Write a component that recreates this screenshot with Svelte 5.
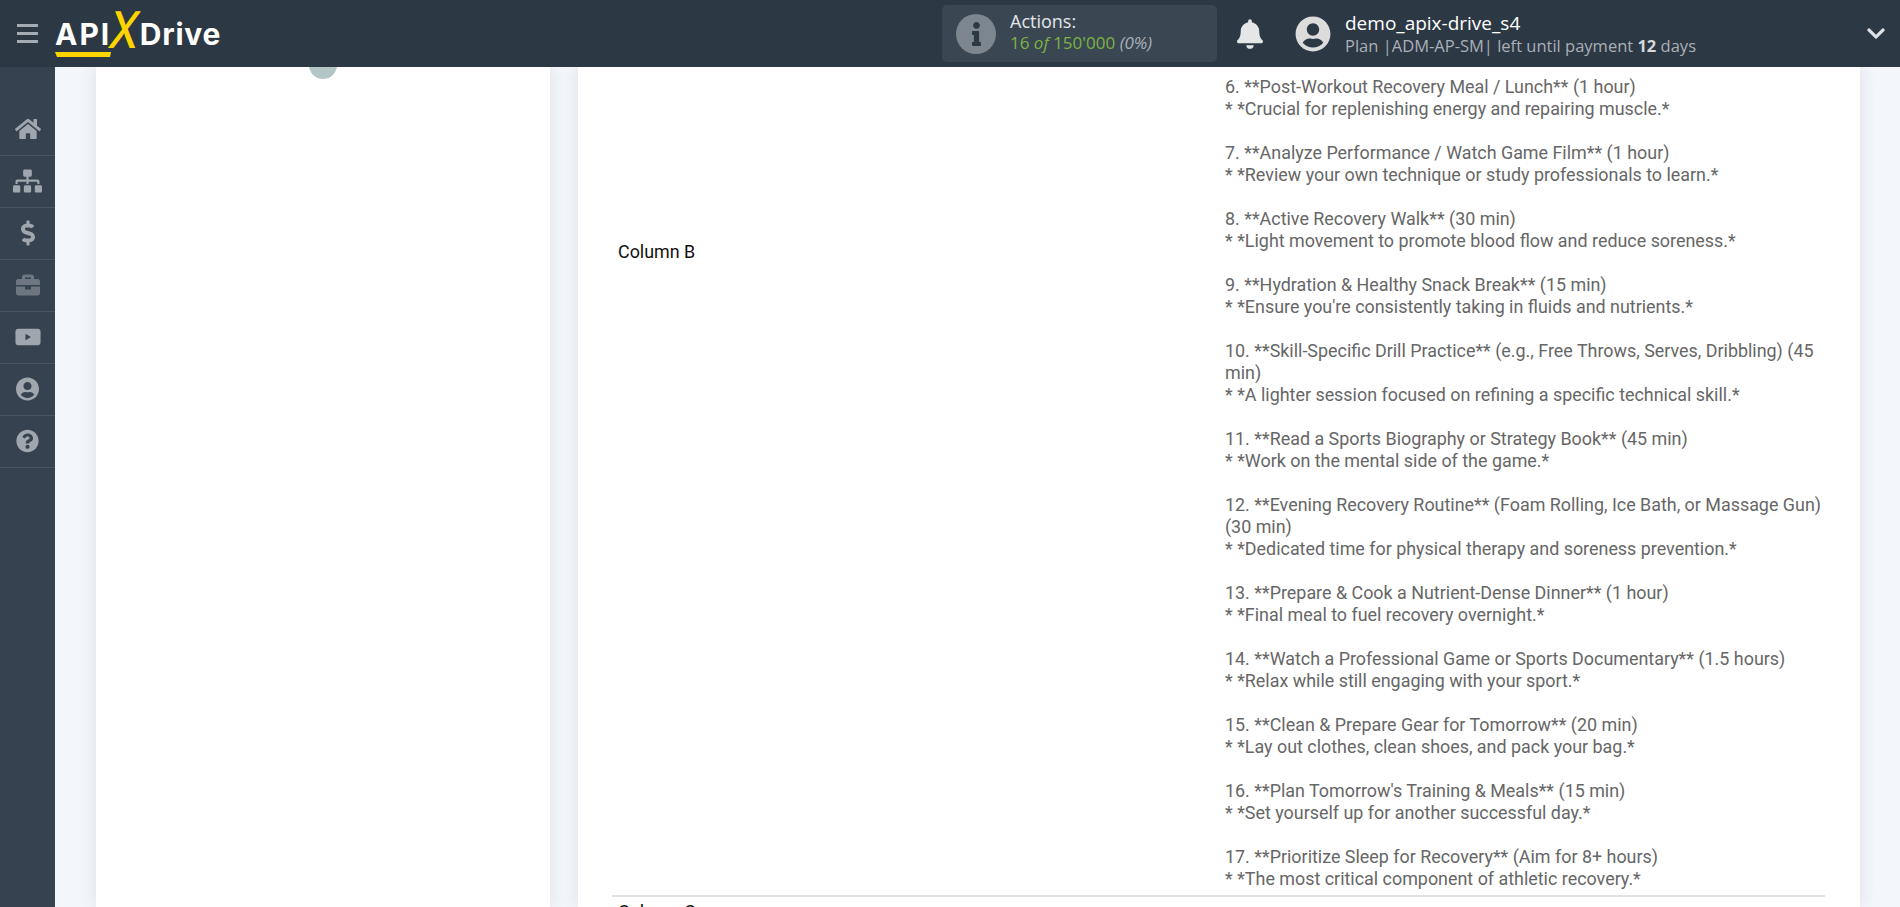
<script lang="ts">
  // visible part of the long value cell, blocks split by blank lines
  const blocks: string[][] = [
    ['6. **Post-Workout Recovery Meal / Lunch** (1 hour)', '* *Crucial for replenishing energy and repairing muscle.*'],
    ['7. **Analyze Performance / Watch Game Film** (1 hour)', '* *Review your own technique or study professionals to learn.*'],
    ['8. **Active Recovery Walk** (30 min)', '* *Light movement to promote blood flow and reduce soreness.*'],
    ['9. **Hydration & Healthy Snack Break** (15 min)', "* *Ensure you're consistently taking in fluids and nutrients.*"],
    ['10. **Skill-Specific Drill Practice** (e.g., Free Throws, Serves, Dribbling) (45 min)', '* *A lighter session focused on refining a specific technical skill.*'],
    ['11. **Read a Sports Biography or Strategy Book** (45 min)', '* *Work on the mental side of the game.*'],
    ['12. **Evening Recovery Routine** (Foam Rolling, Ice Bath, or Massage Gun) (30 min)', '* *Dedicated time for physical therapy and soreness prevention.*'],
    ['13. **Prepare & Cook a Nutrient-Dense Dinner** (1 hour)', '* *Final meal to fuel recovery overnight.*'],
    ['14. **Watch a Professional Game or Sports Documentary** (1.5 hours)', '* *Relax while still engaging with your sport.*'],
    ['15. **Clean & Prepare Gear for Tomorrow** (20 min)', '* *Lay out clothes, clean shoes, and pack your bag.*'],
    ["16. **Plan Tomorrow's Training & Meals** (15 min)", '* *Set yourself up for another successful day.*'],
    ['17. **Prioritize Sleep for Recovery** (Aim for 8+ hours)', '* *The most critical component of athletic recovery.*'],
  ];

  const nav = [
    { vb: '0 0 576 512', w: 26, d: 'M280.37 148.26L96 300.11V464a16 16 0 0 0 16 16l112.06-.29a16 16 0 0 0 15.92-16V368a16 16 0 0 1 16-16h64a16 16 0 0 1 16 16v95.64a16 16 0 0 0 16 16.05L464 480a16 16 0 0 0 16-16V300L295.67 148.26a12.19 12.19 0 0 0-15.3 0zM571.6 251.47L488 182.56V44.05a12 12 0 0 0-12-12h-56a12 12 0 0 0-12 12v72.61L318.47 43a48 48 0 0 0-61 0L4.34 251.47a12 12 0 0 0-1.6 16.9l25.5 31A12 12 0 0 0 45.15 301l235.22-193.74a12.19 12.19 0 0 1 15.3 0L530.9 301a12 12 0 0 0 16.9-1.6l25.5-31a12 12 0 0 0-1.7-16.93z' },
    { vb: '0 0 640 512', w: 29, d: 'M128 352H32c-17.67 0-32 14.33-32 32v96c0 17.67 14.33 32 32 32h96c17.67 0 32-14.33 32-32v-96c0-17.67-14.33-32-32-32zm-24-80h192v48h48v-48h192v48h48v-57.59c0-21.17-17.23-38.41-38.41-38.41H344v-64h40c17.67 0 32-14.33 32-32V32c0-17.67-14.33-32-32-32H256c-17.67 0-32 14.33-32 32v96c0 17.67 14.33 32 32 32h40v64H94.41C73.23 224 56 241.23 56 262.41V320h48v-48zm264 80h-96c-17.67 0-32 14.33-32 32v96c0 17.67 14.33 32 32 32h96c17.67 0 32-14.33 32-32v-96c0-17.67-14.33-32-32-32zm240 0h-96c-17.67 0-32 14.33-32 32v96c0 17.67 14.33 32 32 32h96c17.67 0 32-14.33 32-32v-96c0-17.67-14.33-32-32-32z' },
    { vb: '0 0 288 512', w: 14, d: 'M209.2 233.4l-108-31.6C88.7 198.2 80 186.5 80 173.5c0-16.3 13.2-29.5 29.5-29.5h66.3c12.2 0 24.2 3.7 34.2 10.5 6.1 4.1 14.3 3.1 19.5-2l34.8-34c7.1-6.9 6.1-18.4-1.8-24.5C238 74.8 207.4 64.1 176 64V16c0-8.8-7.2-16-16-16h-32c-8.8 0-16 7.2-16 16v48h-2.5C45.8 64-5.4 118.7.5 183.6c4.2 46.1 39.4 83.6 83.8 96.6l102.5 30c12.5 3.7 21.2 15.3 21.2 28.3 0 16.3-13.2 29.5-29.5 29.5h-66.3C100 368 88 364.3 78 357.5c-6.1-4.1-14.3-3.1-19.5 2l-34.8 34c-7.1 6.9-6.1 18.4 1.8 24.5 24.5 19.2 55.1 29.9 86.5 30v48c0 8.8 7.2 16 16 16h32c8.8 0 16-7.2 16-16v-48.2c46.6-.9 90.3-28.6 105.7-72.7 21.5-61.6-14.6-124.8-72.5-141.7z' },
    { vb: '0 0 512 512', w: 24, dim: true, d: 'M320 336c0 8.84-7.16 16-16 16h-96c-8.84 0-16-7.16-16-16v-48H0v144c0 25.6 22.4 48 48 48h416c25.6 0 48-22.4 48-48V288H320v48zm144-208h-80V80c0-25.6-22.4-48-48-48H176c-25.6 0-48 22.4-48 48v48H48c-25.6 0-48 22.4-48 48v80h512v-80c0-25.6-22.4-48-48-48zm-144 0H192V96h128v32z' },
    { vb: '0 0 576 512', w: 26, d: 'M70 74h436c34 0 60 26 60 60v244c0 34-26 60-60 60H70c-34 0-60-26-60-60V134c0-34 26-60 60-60zM232 186v140l120-70z' },
    { vb: '0 0 496 512', w: 23, d: 'M248 8C111 8 0 119 0 256s111 248 248 248 248-111 248-248S385 8 248 8zm0 96c48.6 0 88 39.4 88 88s-39.4 88-88 88-88-39.4-88-88 39.4-88 88-88zm0 344c-58.7 0-111.3-26.6-146.5-68.2 18.8-35.4 55.6-59.8 98.5-59.8 2.4 0 4.8.4 7.1 1.1 13 4.2 26.6 6.9 40.9 6.9 14.3 0 28-2.7 40.9-6.9 2.3-.7 4.7-1.1 7.1-1.1 42.9 0 79.7 24.4 98.5 59.8C359.3 421.4 306.7 448 248 448z' },
    { vb: '0 0 512 512', w: 23, d: 'M504 256c0 136.997-111.043 248-248 248S8 392.997 8 256C8 119.083 119.043 8 256 8s248 111.083 248 248zM262.655 90c-54.497 0-89.255 22.957-116.549 63.758-3.536 5.286-2.353 12.415 2.715 16.258l34.699 26.31c5.205 3.947 12.621 3.008 16.665-2.122 17.864-22.658 30.113-35.797 57.303-35.797 20.429 0 45.698 13.148 45.698 32.958 0 14.976-12.363 22.667-32.534 33.976C247.128 238.528 216 254.941 216 296v4c0 6.627 5.373 12 12 12h56c6.627 0 12-5.373 12-12v-1.333c0-28.462 83.186-29.647 83.186-106.667 0-58.002-60.165-102-116.531-102zM256 338c-25.365 0-46 20.635-46 46 0 25.364 20.635 46 46 46s46-20.636 46-46c0-25.365-20.635-46-46-46z' },
  ];
</script>

<div class="page">
  <header class="topbar">
    <div class="burger"><span></span><span></span><span></span></div>
    <div class="logo">
      <span class="logo-api">API</span><span class="logo-x">X</span><span class="logo-drive">Drive</span>
      <svg class="logo-bar" viewBox="0 0 57 6" width="57" height="6"><polygon points="0,0 56,0 55,5 2,5" fill="#ffd500" /></svg>
    </div>

    <div class="actions">
      <div class="info-circle">
        <svg viewBox="0 0 192 512" width="9" height="24"><path fill="#2d3845" d="M20 424.229h20V279.771H20c-11.046 0-20-8.954-20-20V212c0-11.046 8.954-20 20-20h112c11.046 0 20 8.954 20 20v212.229h20c11.046 0 20 8.954 20 20V492c0 11.046-8.954 20-20 20H20c-11.046 0-20-8.954-20-20v-47.771c0-11.046 8.954-20 20-20zM96 0C56.235 0 24 32.235 24 72s32.235 72 72 72 72-32.235 72-72S135.764 0 96 0z" /></svg>
      </div>
      <div class="actions-text">
        <div class="actions-title">Actions:</div>
        <div class="actions-count">16 <i>of</i> 150'000 <i class="pct">(0%)</i></div>
      </div>
    </div>

    <svg class="bell" viewBox="0 0 448 512" width="26" height="30"><path fill="#e4e6e8" d="M224 512c35.32 0 63.97-28.65 63.97-64H160.03c0 35.35 28.65 64 63.97 64zm215.39-149.71c-19.32-20.76-55.47-51.99-55.47-154.29 0-77.7-54.48-139.9-127.94-155.16V32c0-17.67-14.32-32-31.98-32s-31.98 14.33-31.98 32v20.84C118.56 68.1 64.08 130.3 64.08 208c0 102.3-36.15 133.53-55.47 154.29-6 6.45-8.66 14.16-8.61 21.71.11 16.4 12.98 32 32.1 32h383.8c19.12 0 32-15.6 32.1-32 .05-7.55-2.61-15.27-8.61-21.71z" /></svg>

    <svg class="avatar" viewBox="0 0 496 512" width="36" height="36"><path fill="#dcdcdc" d="M248 8C111 8 0 119 0 256s111 248 248 248 248-111 248-248S385 8 248 8zm0 96c48.6 0 88 39.4 88 88s-39.4 88-88 88-88-39.4-88-88 39.4-88 88-88zm0 344c-58.7 0-111.3-26.6-146.5-68.2 18.8-35.4 55.6-59.8 98.5-59.8 2.4 0 4.8.4 7.1 1.1 13 4.2 26.6 6.9 40.9 6.9 14.3 0 28-2.7 40.9-6.9 2.3-.7 4.7-1.1 7.1-1.1 42.9 0 79.7 24.4 98.5 59.8C359.3 421.4 306.7 448 248 448z" /></svg>
    <div class="account">
      <div class="account-name">demo_apix-drive_s4</div>
      <div class="account-plan">Plan |ADM-AP-SM| left until payment <b>12</b> days</div>
    </div>

    <svg class="chevron" viewBox="0 0 448 512" width="18" height="21"><path fill="#dfe2e6" d="M207.029 381.476L12.686 187.132c-9.373-9.373-9.373-24.569 0-33.941l22.667-22.667c9.357-9.357 24.522-9.375 33.901-.04L224 284.505l154.745-154.021c9.379-9.335 24.544-9.317 33.901.04l22.667 22.667c9.373 9.373 9.373 24.569 0 33.941L240.971 381.476c-9.373 9.372-24.569 9.372-33.942 0z" /></svg>
  </header>

  <div class="body">
    <nav class="sidebar">
      {#each nav as item}
        <div class="nav-item">
          <svg viewBox={item.vb} width={item.w} height="26" class:dim={item.dim}><path d={item.d} /></svg>
        </div>
      {/each}
    </nav>

    <main class="main">
      <section class="card card-left">
        <span class="badge"></span>
      </section>
      <section class="card card-right">
        <div class="row">
          <div class="cell-label">Column B</div>
          <div class="cell-value">
            {#each blocks as block}
              <p>{#each block as line}<span>{line}</span>{/each}</p>
            {/each}
          </div>
        </div>
        <div class="row-next">Column C</div>
      </section>
    </main>
  </div>
</div>

<style>
  :global(body) {
    margin: 0;
    background: #f3f6fb;
  }

  .page {
    height: 907px;
    display: flex;
    flex-direction: column;
    overflow: hidden;
  }

  .topbar {
    flex: none;
    height: 67px;
    background: #2d3845;
    display: flex;
    align-items: center;
    font-family: 'Open Sans', sans-serif;
    position: relative;
    z-index: 2;
  }

  .burger {
    width: 21px;
    margin-left: 17px;
    display: flex;
    flex-direction: column;
    gap: 5px;
  }

  .burger span {
    height: 3px;
    background: #a5abb2;
  }

  .logo {
    position: relative;
    margin-left: 17px;
    width: 170px;
    height: 50px;
    display: flex;
    align-items: center;
    color: #fff;
    font-family: Inter, sans-serif;
    font-weight: 700;
    font-size: 30px;
  }

  .logo-api {
    letter-spacing: 2px;
  }

  .logo-drive {
    letter-spacing: 0.8px;
  }

  .logo-x {
    display: inline-block;
    color: #ffd500;
    font-size: 42px;
    font-weight: 500;
    line-height: 50px;
    margin: -8px 0 0 -1px;
    transform: skewX(-10deg) scale(1, 1.2);
  }

  .logo-bar {
    position: absolute;
    left: 0;
    top: 43px;
  }

  .actions {
    margin-left: 717px;
    width: 275px;
    height: 57px;
    box-sizing: border-box;
    padding-left: 14px;
    background: #3a4753;
    border-radius: 5px;
    display: flex;
    align-items: center;
    gap: 14px;
  }

  .info-circle {
    width: 40px;
    height: 40px;
    border-radius: 50%;
    background: #7d868f;
    display: flex;
    align-items: center;
    justify-content: center;
  }

  .actions-text {
    margin-top: -3px;
  }

  .actions-title {
    color: #e3e6e9;
    font-size: 18px;
    line-height: 22px;
  }

  .actions-count {
    color: #7cb342;
    font-size: 17px;
    line-height: 22px;
  }

  .actions-count .pct {
    color: #a9b0b7;
  }

  .bell {
    margin-left: 20px;
  }

  .avatar {
    margin-left: 32px;
  }

  .account {
    margin-left: 14px;
  }

  .account-name {
    color: #fff;
    font-size: 19px;
    line-height: 24px;
  }

  .account-plan {
    color: #a9b0b7;
    font-size: 16.5px;
    line-height: 21px;
  }

  .account-plan b {
    color: #d5d8dc;
  }

  .chevron {
    margin-left: auto;
    margin-right: 15px;
  }

  .body {
    flex: 1;
    min-height: 0;
    display: flex;
  }

  .sidebar {
    flex: none;
    width: 55px;
    box-sizing: border-box;
    padding-top: 37px;
    background: #374250;
  }

  .nav-item {
    height: 52px;
    box-sizing: border-box;
    padding-bottom: 2px;
    border-bottom: 1px solid #4a5461;
    display: flex;
    align-items: center;
    justify-content: center;
  }

  .nav-item svg {
    fill: #a0a6ae;
  }

  .nav-item svg.dim {
    fill: #6d7681;
  }

  .main {
    flex: 1;
    min-width: 0;
    display: flex;
    align-items: flex-start;
    gap: 28px;
    padding: 0 40px 0 41px;
  }

  .card {
    background: #fff;
    box-shadow: 0 0 16px rgba(60, 70, 90, 0.12);
  }

  .card-left {
    flex: none;
    width: 454px;
    height: 840px;
    position: relative;
  }

  .badge {
    position: absolute;
    left: 213px;
    top: -16px;
    width: 28px;
    height: 28px;
    border-radius: 50%;
    background: #b3c5c5;
  }

  .card-right {
    flex: 1;
    min-width: 0;
    box-sizing: border-box;
    padding: 0 35px 0 34px;
    height: 840px;
    overflow: hidden;
    font-family: Roboto, sans-serif;
    font-size: 17.9px;
    line-height: 22px;
  }

  .row {
    height: 830px;
    box-sizing: border-box;
    border-bottom: 2px solid #e2e2e2;
    display: flex;
  }

  .cell-label {
    flex: none;
    width: 613px;
    padding: 174px 0 0 6px;
    box-sizing: border-box;
    color: #111;
  }

  .cell-value {
    flex: 1;
    color: #666;
    padding-top: 9px;
  }

  .cell-value p {
    margin: 0 0 22px;
  }

  .cell-value span {
    display: block;
  }

  .row-next {
    padding: 4px 0 0 6px;
    color: #111;
  }
</style>
